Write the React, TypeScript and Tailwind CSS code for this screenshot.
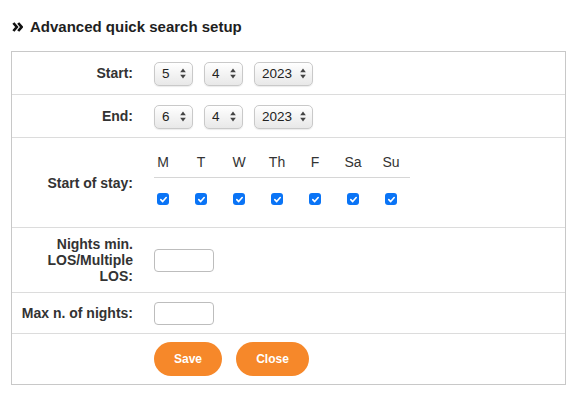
import React from "react";

const days = ["M", "T", "W", "Th", "F", "Sa", "Su"];

const SelectBox = ({ value, width }: { value: string; width: string }) => {
  return (
    <div className={`relative h-[24px] ${width}`}>
      <select
        defaultValue={value}
        className="appearance-none w-full h-full pl-[7px] pr-[16px] text-[13.5px] text-[#222] rounded-[5px] border border-[#c9c9c9] bg-gradient-to-b from-white to-[#e8e8e8] shadow-[0_1px_1px_rgba(0,0,0,0.08)] outline-none"
      >
        <option>{value}</option>
      </select>
      <svg
        className="absolute right-[7px] top-[7px] pointer-events-none"
        width="6"
        height="11"
        viewBox="0 0 6 11"
      >
        <path d="M3 0.5 L5.8 4.3 H0.2 Z" fill="#444" />
        <path d="M3 10.5 L5.8 6.7 H0.2 Z" fill="#444" />
      </svg>
    </div>
  );
};

const CheckBox = () => (
  <span className="flex items-center justify-center w-[12px] h-[12px] rounded-[3px] bg-[#0a74f6]">
    <svg width="9" height="9" viewBox="0 0 10 10">
      <path d="M2 5.2 L4.1 7.3 L8 2.8" fill="none" stroke="white" strokeWidth="1.8" strokeLinecap="round" strokeLinejoin="round" />
    </svg>
  </span>
);

const Row = ({ label, height, last, children }: { label: React.ReactNode; height: string; last?: boolean; children: React.ReactNode }) => (
  <div className={`flex items-center ${height} ${last ? "" : "border-b border-[#dcdcdc]"}`}>
    <div className="w-[132px] shrink-0 pl-[6px] pr-[11px] text-right font-bold text-[14px] leading-[16px] text-[#333]">
      {label}
    </div>
    <div className="flex-1 pl-[10px]">{children}</div>
  </div>
);

const App = () => {
  return (
    <div className="w-[575px] h-[393px] bg-white pl-[11px] pt-[18px] font-['Liberation_Sans',Arial,sans-serif]">
      <div className="flex items-center h-[18px] mb-[15px] text-[15px] font-bold text-[#1e1e1e]">
        <svg className="ml-[1px] mr-[7px]" width="11" height="10" viewBox="0 0 11 10">
          <path d="M1.4 1 L4.8 5 L1.4 9" fill="none" stroke="#111" strokeWidth="2.7" strokeLinejoin="miter" />
          <path d="M6.2 1 L9.6 5 L6.2 9" fill="none" stroke="#111" strokeWidth="2.7" strokeLinejoin="miter" />
        </svg>
        <span>Advanced quick search setup</span>
      </div>

      <div className="w-[555px] border border-[#c8c8c8]">
        <Row label="Start:" height="h-[43px]">
          <div className="flex gap-[11px]">
            <SelectBox value="5" width="w-[39px]" />
            <SelectBox value="4" width="w-[39px]" />
            <SelectBox value="2023" width="w-[59px]" />
          </div>
        </Row>
        <Row label="End:" height="h-[43px]">
          <div className="flex gap-[11px]">
            <SelectBox value="6" width="w-[39px]" />
            <SelectBox value="4" width="w-[39px]" />
            <SelectBox value="2023" width="w-[59px]" />
          </div>
        </Row>
        <Row label="Start of stay:" height="h-[90px]">
          <div className="-ml-[10px] w-[266px]">
            <div className="grid grid-cols-[repeat(7,38px)] h-[32px] items-center pt-[2px] text-[14px] text-[#333]">
              {days.map((d) => (
                <span key={d} className="text-center">{d}</span>
              ))}
            </div>
            <div className="ml-[10px] w-[256px] border-t border-[#d6d6d6]" />
            <div className="grid grid-cols-[repeat(7,38px)] h-[42px] items-center">
              {days.map((d) => (
                <span key={d} className="flex justify-center">
                  <CheckBox />
                </span>
              ))}
            </div>
          </div>
        </Row>
        <Row
          label={
            <>
              Nights min.
              <br />
              LOS/Multiple
              <br />
              LOS:
            </>
          }
          height="h-[65px]"
        >
          <input className="block w-[60px] h-[23px] rounded-[4px] border border-[#bdbdbd] outline-none" />
        </Row>
        <Row label="Max n. of nights:" height="h-[41px]">
          <input className="block w-[60px] h-[23px] rounded-[4px] border border-[#bdbdbd] outline-none" />
        </Row>
        <Row label="" height="h-[50px]" last>
          <div className="flex gap-[14px]">
            <button className="w-[68px] h-[34px] rounded-full bg-[#f6882a] text-white font-bold text-[12px]">
              Save
            </button>
            <button className="w-[73px] h-[34px] rounded-full bg-[#f6882a] text-white font-bold text-[12px]">
              Close
            </button>
          </div>
        </Row>
      </div>
    </div>
  );
};

export default App;
